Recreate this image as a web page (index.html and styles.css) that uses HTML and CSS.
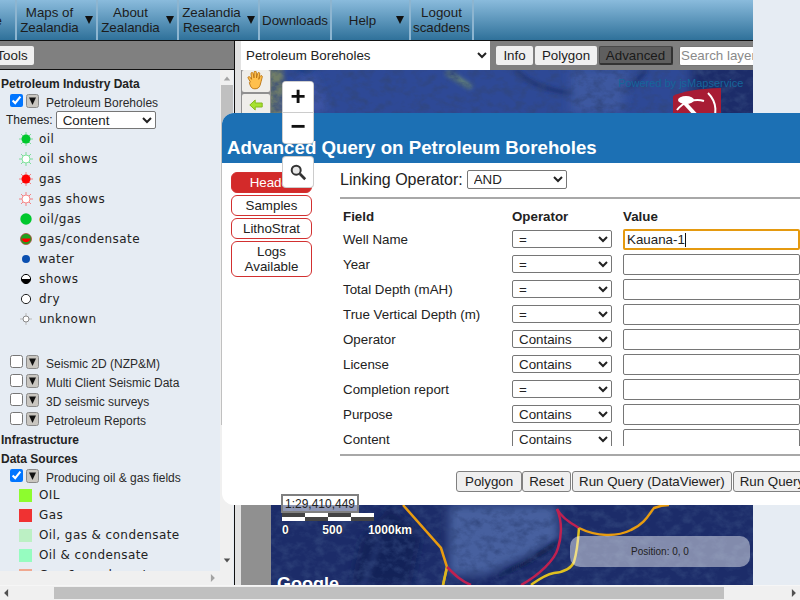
FILE: index.html
```html
<!DOCTYPE html>
<html lang="en">
<head>
<meta charset="utf-8">
<title>Petroleum Boreholes</title>
<link rel="stylesheet" href="styles.css">
</head>
<body>
<svg class="defs" width="0" height="0" aria-hidden="true">
  <defs>
    <g id="sun"><path d="M7 0v14M0 7h14M2 2l10 10M12 2L2 12" stroke-width="1" opacity=".45"/></g>
    <g id="tri"><rect x=".5" y=".5" width="12" height="13" rx="2" fill="#c9c6c0" stroke="#8a8a8a"/><path d="M3 3.500h7L6.500 11z" fill="#111"/></g>
  </defs>
</svg>
<div class="viewport">
  <div class="app">
    <nav class="menu">
      <div class="mi mi-clip"><span>Home</span></div>
      <div class="mi mi-a"><span class="mt">Maps of<br>Zealandia</span><span class="ar"></span></div>
      <div class="mi mi-a"><span class="mt">About<br>Zealandia</span><span class="ar"></span></div>
      <div class="mi mi-a"><span class="mt">Zealandia<br>Research</span><span class="ar"></span></div>
      <div class="mi mi-d"><span class="mt">Downloads</span></div>
      <div class="mi mi-h"><span class="mt mt-help">Help</span><span class="ar"></span></div>
      <div class="mi mi-l"><span class="mt">Logout<br>scaddens</span></div>
      <div class="mi mi-rest"></div>
    </nav>
    <div class="work">
      <aside class="side">
        <div class="side-bar"><button class="tools">Tools</button></div>
        <div class="side-body">
          <div class="side-col">
            <div class="tree">
              <div class="h h-first">Petroleum Industry Data</div>
              <div class="layer"><input type="checkbox" checked><svg class="dd" viewBox="0 0 13 14"><use href="#tri"/></svg><span>Petroleum Boreholes</span></div>
              <div class="themes">Themes: <select class="theme-sel"><option>Content</option></select></div>
              <div class="lg"><svg viewBox="0 0 14 14"><use href="#sun" stroke="#00c832"/><circle cx="7" cy="7" r="4.500" fill="#00c82d"/></svg><span>oil</span></div>
              <div class="lg"><svg viewBox="0 0 14 14"><use href="#sun" stroke="#00c832"/><circle cx="7" cy="7" r="4" fill="#fff" stroke="#7fe39a"/></svg><span>oil shows</span></div>
              <div class="lg"><svg viewBox="0 0 14 14"><use href="#sun" stroke="#ff0000"/><circle cx="7" cy="7" r="4.500" fill="#f00"/></svg><span>gas</span></div>
              <div class="lg"><svg viewBox="0 0 14 14"><use href="#sun" stroke="#ff0000"/><circle cx="7" cy="7" r="4" fill="#fff" stroke="#f78b8b"/></svg><span>gas shows</span></div>
              <div class="lg"><svg viewBox="0 0 14 14"><circle cx="7" cy="7" r="5.700" fill="#00c82d"/></svg><span>oil/gas</span></div>
              <div class="lg"><svg viewBox="0 0 14 14"><circle cx="7" cy="7" r="5.500" fill="#1ea31e" stroke="#b33" stroke-width=".7"/><path d="M2.500 6.500h9a4.600 4.600 0 0 1-9 0z" fill="#f00"/></svg><span>gas/condensate</span></div>
              <div class="lg"><svg viewBox="0 0 14 14"><circle cx="7" cy="7" r="4" fill="#0a4fb0"/></svg><span class="w">water</span></div>
              <div class="lg"><svg viewBox="0 0 14 14"><circle cx="7" cy="7" r="4.600" fill="#fff" stroke="#000"/><path d="M2.400 7h9.200a4.600 4.600 0 0 1-9.200 0z"/></svg><span>shows</span></div>
              <div class="lg"><svg viewBox="0 0 14 14"><circle cx="7" cy="7" r="4.600" fill="#fff" stroke="#222"/></svg><span>dry</span></div>
              <div class="lg"><svg viewBox="0 0 14 14"><path d="M7 1v12M1 7h12" stroke="#bbb"/><circle cx="7" cy="7" r="3" fill="#fff" stroke="#888"/></svg><span>unknown</span></div>
              <div class="layer layer-gap"><input type="checkbox"><svg class="dd" viewBox="0 0 13 14"><use href="#tri"/></svg><span>Seismic 2D (NZP&amp;M)</span></div>
              <div class="layer"><input type="checkbox"><svg class="dd" viewBox="0 0 13 14"><use href="#tri"/></svg><span>Multi Client Seismic Data</span></div>
              <div class="layer"><input type="checkbox"><svg class="dd" viewBox="0 0 13 14"><use href="#tri"/></svg><span>3D seismic surveys</span></div>
              <div class="layer"><input type="checkbox"><svg class="dd" viewBox="0 0 13 14"><use href="#tri"/></svg><span>Petroleum Reports</span></div>
              <div class="h h-low">Infrastructure</div>
              <div class="h h-low">Data Sources</div>
              <div class="layer"><input type="checkbox" checked><svg class="dd" viewBox="0 0 13 14"><use href="#tri"/></svg><span>Producing oil &amp; gas fields</span></div>
              <div class="lg lg-sq"><i class="sq sq-oil"></i><span>OIL</span></div>
              <div class="lg"><i class="sq sq-gas"></i><span>Gas</span></div>
              <div class="lg"><i class="sq sq-ogc"></i><span>Oil, gas &amp; condensate</span></div>
              <div class="lg"><i class="sq sq-oc"></i><span>Oil &amp; condensate</span></div>
              <div class="lg"><i class="sq sq-gc"></i><span>Gas &amp; condensate</span></div>
            </div>
            <div class="hbar"><svg class="sb-ar" viewBox="0 0 6 10"><path d="M1 0l5 5-5 5z" fill="#a3a3a3"/></svg></div>
          </div>
          <div class="vbar">
            <svg viewBox="0 0 10 6" class="vb-ar"><path d="M1 5.500l4-5 4 5z" fill="#a3a3a3"/></svg>
            <div class="vthumb"></div>
            <svg viewBox="0 0 10 6" class="vb-ar"><path d="M1 .5l4 5 4-5z" fill="#505050"/></svg>
          </div>
        </div>
      </aside>
      <div class="split"></div>
      <main class="mainp">
        <div class="toolbar">
          <select class="layer-sel"><option>Petroleum Boreholes</option></select>
          <button class="tb tb-i">Info</button>
          <button class="tb tb-p">Polygon</button>
          <button class="tb tb-on">Advanced</button>
          <input class="search" placeholder="Search layers">
        </div>
        <div class="mapwrap">
          <div class="navcol">
            <button class="nb"><svg class="ic-hand" viewBox="2 1 16 18"><path d="M5 11L3 7.500c-.8-1.300 1-2 1.800-.8L6 8.500 5.500 3.500c-.1-1.500 1.700-1.600 2-.1l.7 3.800.1-5c0-1.500 2-1.500 2 0l.2 5 1-4c.4-1.400 2.100-1 1.900.4l-.9 4.900 1.200-2.700c.6-1.300 2.300-.7 1.900.7-.8 2.500-1 5-2 7.500-.8 2-2 3-4.600 3-3.500 0-4-2.500-5-5.500z" fill="#ffc04d" stroke="#b8700c" stroke-width=".8"/></svg></button>
            <button class="nb"><svg class="ic-arrow" viewBox="0 0 14 12"><path d="M.8 6l5.400-5v3h7v4h-7v3z" fill="#a6e22e" stroke="#86b820"/></svg></button>
          </div>
          <div class="map">
            <svg class="mapart" viewBox="0 0 482 515" preserveAspectRatio="none">
              <defs>
                <filter id="tex" x="0" y="0" width="100%" height="100%">
                  <feTurbulence type="fractalNoise" baseFrequency=".09 .12" numOctaves="4" seed="7"/>
                  <feColorMatrix values="0 0 0 0 .03  0 0 0 0 .06  0 0 0 0 .2  1.800 0 0 0 -.75"/>
                </filter>
                <filter id="soft" x="-20%" y="-20%" width="140%" height="140%"><feGaussianBlur stdDeviation="5"/></filter>
                <filter id="soft2" x="-20%" y="-20%" width="140%" height="140%"><feGaussianBlur stdDeviation="2"/></filter>
              </defs>
              <rect width="482" height="515" fill="#1c2c69"/>
              <path d="M-10-10h430v70H-10z" fill="#2f4a96" filter="url(#soft)"/>
              <path d="M-5-10h16l6 60H-5z" fill="#6f7d68" filter="url(#soft2)"/>
              <path d="M18-5h30l-12 10z" fill="#163a7e" filter="url(#soft2)"/>
              <path d="M178 0l24 16 -4 3-24-15z" fill="#6a8a72" filter="url(#soft2)"/>
              <path d="M40 0c5 20 20 30 15 43H10V30z" fill="#3c55a4" filter="url(#soft)"/>
              <path d="M245 0c15 18 50 25 80 25 30 0 40-12 50-25" fill="none" stroke="#1a2a62" stroke-width="3" filter="url(#soft2)"/>
              <path d="M300 0h60l-10 43h-50z" fill="#3e58a0" filter="url(#soft)"/>
              <path d="M178 435h107l3 35-35 18-40 17h-35z" fill="#46609f" filter="url(#soft)"/>
              <path d="M255 490l35-22-8 10-28 17-45 20z" fill="#0e1a44" filter="url(#soft2)"/>
              <path d="M105 470l-15 45 6 0 16-45z" fill="#3a4f94" filter="url(#soft2)"/>
              <path d="M120 435l-30 35-10 45h60l10-50z" fill="#111e4e" opacity=".6" filter="url(#soft)"/>
              <rect width="482" height="515" filter="url(#tex)"/>
              <path d="M132 435l38 43 6 19-4 18" fill="none" stroke="#e89c10" stroke-width="2.500"/>
              <path d="M176 497l-4 18" fill="none" stroke="#d9b821" stroke-width="2.500"/>
              <path d="M176 497c8 8 14 14 24 18" fill="none" stroke="#bf2150" stroke-width="2.500"/>
              <path d="M286 439c6 14 4 30 1 39-3 12-20 28-37 37" fill="none" stroke="#bf2150" stroke-width="2.500"/>
              <path d="M286 439c4 8 13 14 22 19" fill="none" stroke="#bf2150" stroke-width="2.500"/>
              <path d="M308 458c-1 14-2 24-5 34-3 7-10 10-20 11-10 2-16 7-23 12" fill="none" stroke="#dfc020" stroke-width="2.500"/>
              <path d="M308 458c18 9 38 9 52 2 14-6 18-16 23-22 5-2 10-3 15-3" fill="none" stroke="#e89c10" stroke-width="2.500"/>
            </svg>
            <div class="powered">Powered by jsMapservice</div>
            <svg class="crest" viewBox="0 0 48 50"><path d="M0 8Q14 1 48 0v50H0z" fill="#a81c34"/><path d="M9 12l22 24" fill="none" stroke="#fff" stroke-width="4"/><path d="M4 22c6-8 18-12 27-9M35 5c9 9 10 22 2 32" fill="none" stroke="#fff" stroke-width="2"/><ellipse cx="13" cy="12" rx="8" ry="4" fill="#fff"/></svg>
            <div class="ctl ctl-z">
              <button class="cb cb-p">+</button>
              <button class="cb cb-m">−</button>
            </div>
            <button class="cb ctl-s"><svg viewBox="0 0 20 20" width="18" height="18"><circle cx="8" cy="8" r="5" fill="#e8e8e8" stroke="#333" stroke-width="2.200"/><path d="M12 12l6 6" stroke="#333" stroke-width="3"/></svg></button>
            <div class="scale">
              <div class="ratio">1:29,410,449</div>
              <div class="bar"><i></i><i></i><i></i><i></i></div>
              <div class="nums"><span>0</span><span>500</span><span>1000km</span></div>
            </div>
            <div class="pos">Position: 0, 0</div>
            <div class="goog">Google</div>
          </div>
        </div>
      </main>
    </div>
  </div>
  <div class="pagebar">
    <svg class="pb-ar" viewBox="0 0 6 10"><path d="M5 0L0 5l5 5z" fill="#505050"/></svg>
    <div class="pthumb"></div>
    <svg class="pb-ar pb-end" viewBox="0 0 6 10"><path d="M1 0l5 5-5 5z" fill="#505050"/></svg>
  </div>
</div>
<section class="dlg">
  <header class="dlg-h">Advanced Query on Petroleum Boreholes</header>
  <div class="dlg-b">
    <div class="tabs">
      <button class="tab tab-on">Header</button>
      <button class="tab">Samples</button>
      <button class="tab">LithoStrat</button>
      <button class="tab">Logs Available</button>
    </div>
    <div class="qry">
      <div class="link">Linking Operator: <select class="op link-op"><option>AND</option></select></div>
      <div class="scroll">
        <table class="qt">
          <thead><tr><th class="c1">Field</th><th class="c2">Operator</th><th class="c3">Value</th></tr></thead>
          <tbody>
            <tr><td>Well Name</td><td><select class="op"><option>=</option></select></td><td><div class="val val-on">Kauana-1<i class="caret"></i></div></td></tr>
            <tr><td>Year</td><td><select class="op"><option>=</option></select></td><td><div class="val"></div></td></tr>
            <tr><td>Total Depth (mAH)</td><td><select class="op"><option>=</option></select></td><td><div class="val"></div></td></tr>
            <tr><td>True Vertical Depth (m)</td><td><select class="op"><option>=</option></select></td><td><div class="val"></div></td></tr>
            <tr><td>Operator</td><td><select class="op"><option>Contains</option></select></td><td><div class="val"></div></td></tr>
            <tr><td>License</td><td><select class="op"><option>Contains</option></select></td><td><div class="val"></div></td></tr>
            <tr><td>Completion report</td><td><select class="op"><option>=</option></select></td><td><div class="val"></div></td></tr>
            <tr><td>Purpose</td><td><select class="op"><option>Contains</option></select></td><td><div class="val"></div></td></tr>
            <tr><td>Content</td><td><select class="op"><option>Contains</option></select></td><td><div class="val"></div></td></tr>
          </tbody>
        </table>
      </div>
      <div class="rule"></div>
      <div class="acts">
        <button class="act act-wide">Polygon</button><button class="act">Reset</button><button class="act act-gap">Run Query (DataViewer)</button><button class="act act-gap">Run Query</button>
      </div>
    </div>
  </div>
</section>
</body>
</html>
```
FILE: styles.css
```css
* { box-sizing: border-box; }
html, body { margin: 0; height: 100%; overflow: hidden; }
body { background: #e6ecf3; font-family: "Liberation Sans", Arial, sans-serif; color: #222; position: relative; }
.defs { position: absolute; }
.viewport { height: 600px; display: flex; flex-direction: column; }
.app { width: 753px; height: 585px; display: flex; flex-direction: column; flex: none; }

.menu { height: 41px; display: flex; flex: none; background: linear-gradient(#8abbdc, #2f719a); border-bottom: 1px solid #111; font-size: 13.33px; line-height: 15px; color: #1c1c1c; }
.mi { display: flex; align-items: center; height: 40px; border-right: 2px solid #8db5d0; flex: none; position: relative; }
.mi-clip { width: 17px; justify-content: flex-end; padding-right: 13px; overflow: hidden; }
.mi-a { width: 81px; }
.mi-d { width: 72px; justify-content: center; }
.mi-h { width: 79px; }
.mi-l { width: 63px; justify-content: center; }
.mi-rest { flex: 1; border: 0; }
.mt { text-align: center; width: 65px; flex: none; }
.mi-d .mt, .mi-l .mt { width: auto; }
.ar { width: 0; height: 0; flex: none; margin-left: 3px; border-left: 4px solid transparent; border-right: 4px solid transparent; border-top: 8px solid #111; }
.mt-help { width: 61px; }

.work { flex: 1; display: flex; min-height: 0; }
.side { width: 235px; flex: none; display: flex; flex-direction: column; border-right: 1px solid #111; }
.side-bar { height: 29px; background: #808080; border-bottom: 1px solid #111; display: flex; align-items: center; flex: none; overflow: hidden; }
.tools { margin-left: -12px; height: 19px; width: 46px; font: 13.33px "Liberation Sans", sans-serif; background: #f0f0f0; border: 0; border-radius: 2px; color: #222; padding: 0 0 0 2px; }
.side-body { flex: 1; display: flex; min-height: 0; }
.side-col { flex: 1; min-width: 0; display: flex; flex-direction: column; }
.tree { flex: 1; overflow: hidden; background: #e6ecf3; font-size: 12px; padding: 5px 0 0 1px; }
.h { font-weight: bold; height: 19px; line-height: 19px; color: #222; }
.h-first { height: 18px; line-height: 18px; }
.h-low { line-height: 21px; }
.layer { height: 19px; display: flex; align-items: center; padding-left: 8px; color: #2a2a2a; }
.layer input { margin: 0 3px 0 1px; width: 13px; height: 13px; position: relative; top: -2px; }
.dd { width: 13px; height: 14px; margin-right: 7px; position: relative; top: -2px; }
.layer-gap { margin-top: 25px; }
.themes { display: flex; align-items: center; gap: 3px; padding: 0 0 1px 5px; height: 17px; font-size: 12px; }
.theme-sel { width: 100px; height: 18px; font: 13.33px "Liberation Sans", sans-serif; background: #fff; border: 1px solid #767676; border-radius: 2px; padding: 0 0 0 2px; color: #222; }
.lg { height: 20px; display: flex; align-items: center; padding-left: 18px; font-family: "DejaVu Sans", sans-serif; font-size: 12px; letter-spacing: .42px; color: #222; }
.lg svg { width: 14px; height: 14px; margin-right: 6px; flex: none; }
.lg .w { margin-left: -1px; }
.sq { width: 13px; height: 13px; margin-right: 7px; flex: none; }
.sq-oil { background: #8dfc2e; }
.sq-gas { background: #f03232; }
.sq-ogc { background: #bcf0c4; }
.sq-oc { background: #96fcc0; }
.sq-gc { background: #f0a890; }
.lg-sq { margin-top: -2px; }
.hbar { height: 14px; background: #f0f0f0; flex: none; display: flex; justify-content: flex-end; align-items: center; padding-right: 5px; }
.sb-ar { width: 5px; height: 8px; }
.vbar { width: 14px; flex: none; background: #f0f0f0; display: flex; flex-direction: column; align-items: center; padding-top: 6px; border-right: 1px solid #e6ecf3; }
.vb-ar { width: 8px; height: 5px; flex: none; }
.vthumb { width: 12px; background: #c0c0c0; height: 340px; margin: 4px 0 133px; }

.split { width: 6px; background: #e2e2e2; flex: none; }
.mainp { flex: 1; min-width: 0; display: flex; flex-direction: column; }
.toolbar { height: 29px; background: #808080; display: flex; align-items: center; flex: none; overflow: hidden; }
.layer-sel { width: 249px; height: 29px; flex: none; font: 13.33px "Liberation Sans", sans-serif; background: #fff; border: 0; padding: 0 0 0 1px; color: #222; border-radius: 0; margin-right: 6px; }
.tb { height: 19px; padding: 0; margin-right: 2px; font: 13.33px "Liberation Sans", sans-serif; background: #f0f0f0; border: 0; border-radius: 2px; color: #1c1c1c; flex: none; }
.tb-i { width: 37px; }
.tb-p { width: 62px; }
.tb-on { background: #5f5f5f; color: #1a1a1a; border: 1px solid #4a4a4a; border-right: 2px solid #333; border-bottom: 2px solid #333; margin-right: 6px; width: 74px; }
.search { flex: none; width: 110px; height: 20px; font: 13.33px "Liberation Sans", sans-serif; border: 1px solid #767676; border-radius: 2px; padding: 0 1px; background: #fff; }
.search::placeholder { color: #8a8a8a; }
.mapwrap { flex: 1; display: flex; min-height: 0; }
.navcol { width: 30px; background: #909090; flex: none; display: flex; flex-direction: column; gap: 2px; padding: 0 1px; }
.nb { width: 28px; height: 22px; padding: 0; background: #efeeea; border: 0; border-radius: 2px; display: flex; align-items: center; justify-content: center; flex: none; }
.ic-hand { width: 18px; height: 20px; flex: none; display: block; }
.ic-arrow { width: 14px; height: 12px; flex: none; display: block; }
.map { flex: 1; position: relative; overflow: hidden; background: #1c2c69; }
.mapart { position: absolute; inset: 0; width: 100%; height: 100%; display: block; }
.powered { position: absolute; left: 347px; top: 7px; font-size: 11px; color: #15669a; white-space: nowrap; }
.crest { position: absolute; left: 402px; top: 18px; width: 48px; height: 50px; }
.ctl { position: fixed; z-index: 5; left: 283px; top: 82px; width: 30px; background: #fff; border-radius: 3px; box-shadow: 0 0 0 1px #cfcfcf; }
.cb { width: 30px; height: 30px; display: flex; align-items: center; justify-content: center; background: #fff; border: 0; padding: 0; font: bold 26px/1 "Liberation Sans", sans-serif; color: #111; }
.ctl .cb-p { border-radius: 3px 3px 0 0; padding-bottom: 2px; }
.ctl .cb-m { height: 31px; border-radius: 0 0 3px 3px; border-top: 1px solid #ccc; padding-bottom: 5px; }
.ctl-s { position: fixed; z-index: 5; left: 283px; top: 157px; border-radius: 3px; box-shadow: 0 0 0 1px #ccc; }
.scale { position: absolute; z-index: 5; left: 10px; top: 424px; width: 104px; }
.ratio { width: 78px; height: 19px; border: 2px solid #808080; background: rgba(255,255,255,.5); font-size: 12px; line-height: 16px; text-align: center; color: #222; }
.bar { display: flex; width: 92px; height: 8px; margin-left: 1px; }
.bar i { flex: 1; }
.bar i:nth-child(odd) { background: linear-gradient(#fff 0 0) bottom/100% 4px no-repeat, #444; }
.bar i:nth-child(even) { background: linear-gradient(#444 0 0) bottom/100% 4px no-repeat, #fff; }
.nums { display: flex; justify-content: space-between; color: #fff; font-size: 12px; font-weight: bold; margin-top: 2px; width: 131px; padding-left: 1px; text-shadow: 0 0 1px #000; }
.nums span:nth-child(2) { margin-left: 8px; }
.pos { position: absolute; left: 299px; top: 466px; width: 180px; height: 31px; background: rgba(255,255,255,.45); border-radius: 10px; font-size: 10px; line-height: 31px; text-align: center; color: #222; }
.goog { position: absolute; left: 6px; top: 504px; font: bold 18px "Liberation Sans", sans-serif; color: #fff; }

.pagebar { height: 15px; background: #f0f0f0; display: flex; align-items: center; padding: 0 4px; flex: none; border-top: 1px solid #f6f6f6; }
.pb-ar { width: 5px; height: 8px; flex: none; }
.pb-end { margin-left: auto; }
.pthumb { width: 670px; height: 12px; background: #c0c0c0; margin-left: 45px; }

.dlg { position: absolute; left: 222px; top: 113px; width: 640px; height: 392px; background: #fff; border-radius: 12px; display: flex; flex-direction: column; overflow: hidden; z-index: 3; font-size: 13.33px; color: #222; }
.dlg-h { height: 50px; background: #1c70b4; color: #fff; font-weight: bold; font-size: 18.7px; padding: 24px 0 0 5px; line-height: 22px; flex: none; white-space: nowrap; }
.dlg-b { flex: 1; display: flex; min-height: 0; padding: 9px 0 0 9px; }
.tabs { width: 81px; flex: none; display: flex; flex-direction: column; gap: 2px; }
.tab { font: 13.33px/15px "Liberation Sans", sans-serif; padding: 2px 6px; border: 1px solid #d23030; border-radius: 6px; background: #fff; color: #222; min-height: 21px; text-align: center; }
.tab-on { background: #d32a2a; color: #fff; }
.qry { margin-left: 28px; width: 460px; flex: none; display: flex; flex-direction: column; }
.link { font-size: 16px; height: 25px; display: flex; align-items: center; gap: 4px; margin-top: -5px; color: #222; white-space: nowrap; }
.op { font: 13.33px "Liberation Sans", sans-serif; width: 100px; height: 18px; background: #fff; border: 1px solid #767676; border-radius: 2px; padding: 0 0 0 2px; color: #222; display: block; }
.op.link-op { width: 100px; height: 19px; }
.scroll { margin-top: 5px; border-top: 2px solid #a8a8a8; height: 249px; overflow: hidden; flex: none; }
.rule { height: 2px; background: #a8a8a8; margin-top: 8px; flex: none; }
.qt { border-collapse: collapse; margin: 0; table-layout: fixed; width: 470px; }
.qt th { font-size: 13.33px; text-align: left; padding: 10px 0 0 3px; height: 27px; vertical-align: top; color: #222; }
.qt .c1 { width: 172px; }
.qt .c2 { width: 111px; padding-left: 0; }
.qt .c3 { padding-left: 0; }
.qt td { height: 25px; padding: 2px 0 0 3px; vertical-align: middle; color: #222; }
.qt td:nth-child(2) { padding: 0; }
.qt td:nth-child(3) { padding: 2px 0 0; }
.val { width: 177px; height: 21px; border: 1px solid #767676; border-radius: 2px; background: #fff; padding: 0 3px; line-height: 19px; display: flex; align-items: center; }
.val-on { border: 2px solid #e59a10; padding: 0 2px; }
.caret { width: 1px; height: 14px; background: #111; }
.acts { margin: 15px 0 0 116px; display: flex; width: 520px; }
.act { font: 13.33px "Liberation Sans", sans-serif; height: 21px; padding: 0 6px; flex: none; background: #efefef; border: 1px solid #808080; border-radius: 3px; color: #222; }
.act-wide { padding: 0 8px; }
.act-gap { margin-left: 1px; }
```
